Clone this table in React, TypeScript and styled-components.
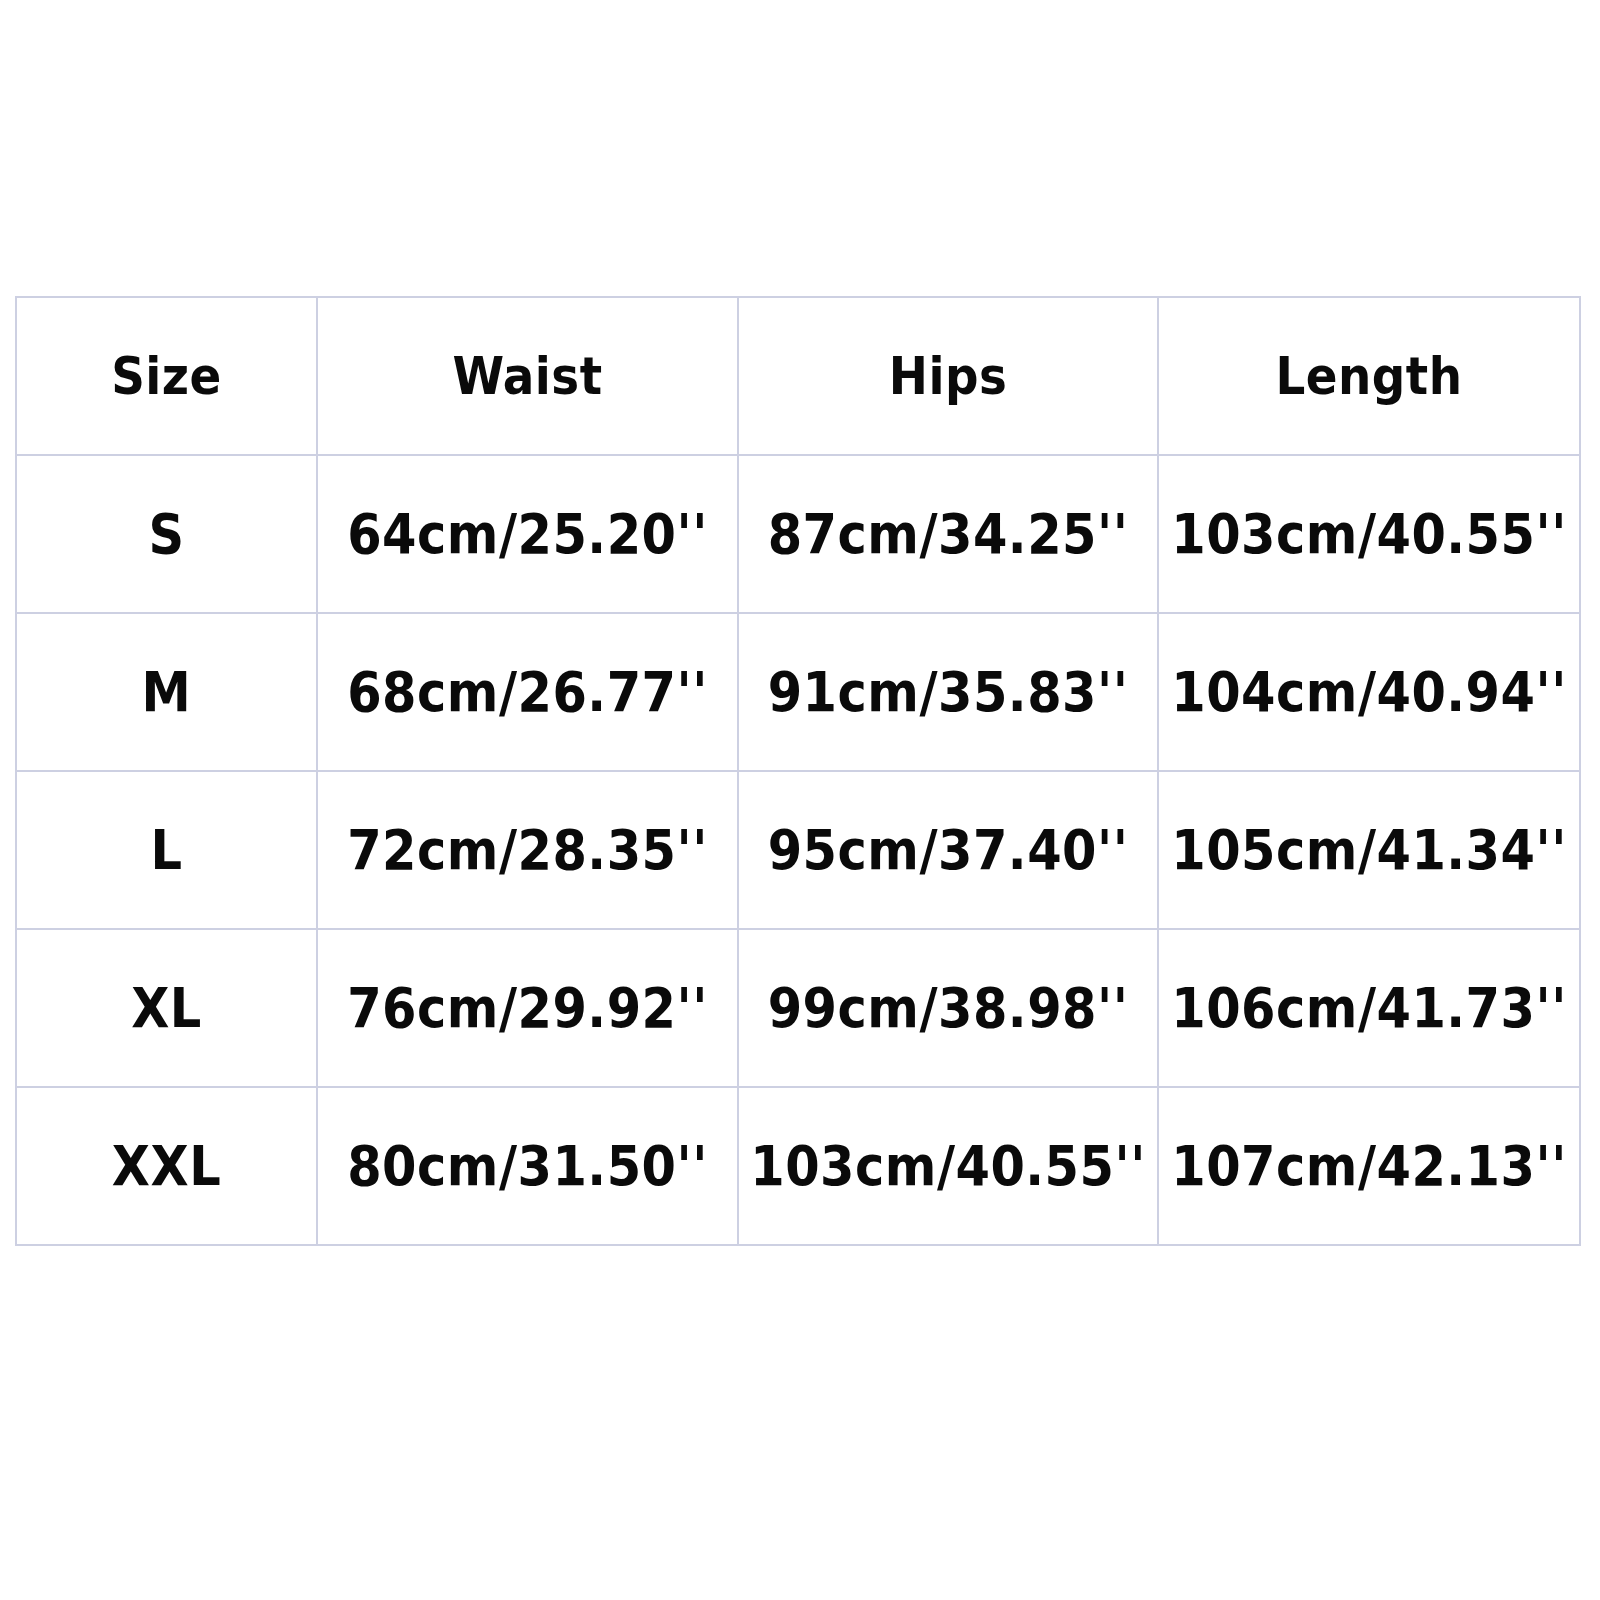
import styled, { createGlobalStyle } from "styled-components";

const GlobalStyle = createGlobalStyle`
  html, body {
    margin: 0;
    padding: 0;
    background: #ffffff;
  }
`;

const Page = styled.div`
  width: 1600px;
  height: 1600px;
  padding: 296px 0 0 15px;
  box-sizing: border-box;
  background: #ffffff;
`;

const Table = styled.table`
  border-collapse: collapse;
  table-layout: fixed;
  width: 1564px;
  font-family: "DejaVu Sans Condensed", "DejaVu Sans", sans-serif;
  font-stretch: condensed;
  font-weight: 700;
  color: #0a0a0a;
`;

const Cell = styled.td<{ $head?: boolean }>`
  height: 156px;
  padding: 0;
  border: 2px solid #cdd0e2;
  text-align: center;
  vertical-align: middle;
  white-space: nowrap;
  font-size: ${(p) => (p.$head ? "52px" : "55px")};
  letter-spacing: ${(p) => (p.$head ? "0.5px" : "0.5px")};
`;

const columns = [
  { label: "Size", width: 301 },
  { label: "Waist", width: 421 },
  { label: "Hips", width: 420 },
  { label: "Length", width: 422 },
];

const rows = [
  ["S", "64cm/25.20''", "87cm/34.25''", "103cm/40.55''"],
  ["M", "68cm/26.77''", "91cm/35.83''", "104cm/40.94''"],
  ["L", "72cm/28.35''", "95cm/37.40''", "105cm/41.34''"],
  ["XL", "76cm/29.92''", "99cm/38.98''", "106cm/41.73''"],
  ["XXL", "80cm/31.50''", "103cm/40.55''", "107cm/42.13''"],
];

const App = () => (
  <Page>
    <GlobalStyle />
    <Table>
      <colgroup>
        {columns.map((c) => (
          <col key={c.label} style={{ width: c.width }} />
        ))}
      </colgroup>
      <thead>
        <tr>
          {columns.map((c) => (
            <Cell as="th" $head key={c.label}>
              {c.label}
            </Cell>
          ))}
        </tr>
      </thead>
      <tbody>
        {rows.map((row) => (
          <tr key={row[0]}>
            {row.map((value, i) => (
              <Cell key={i}>{value}</Cell>
            ))}
          </tr>
        ))}
      </tbody>
    </Table>
  </Page>
);

export default App;
